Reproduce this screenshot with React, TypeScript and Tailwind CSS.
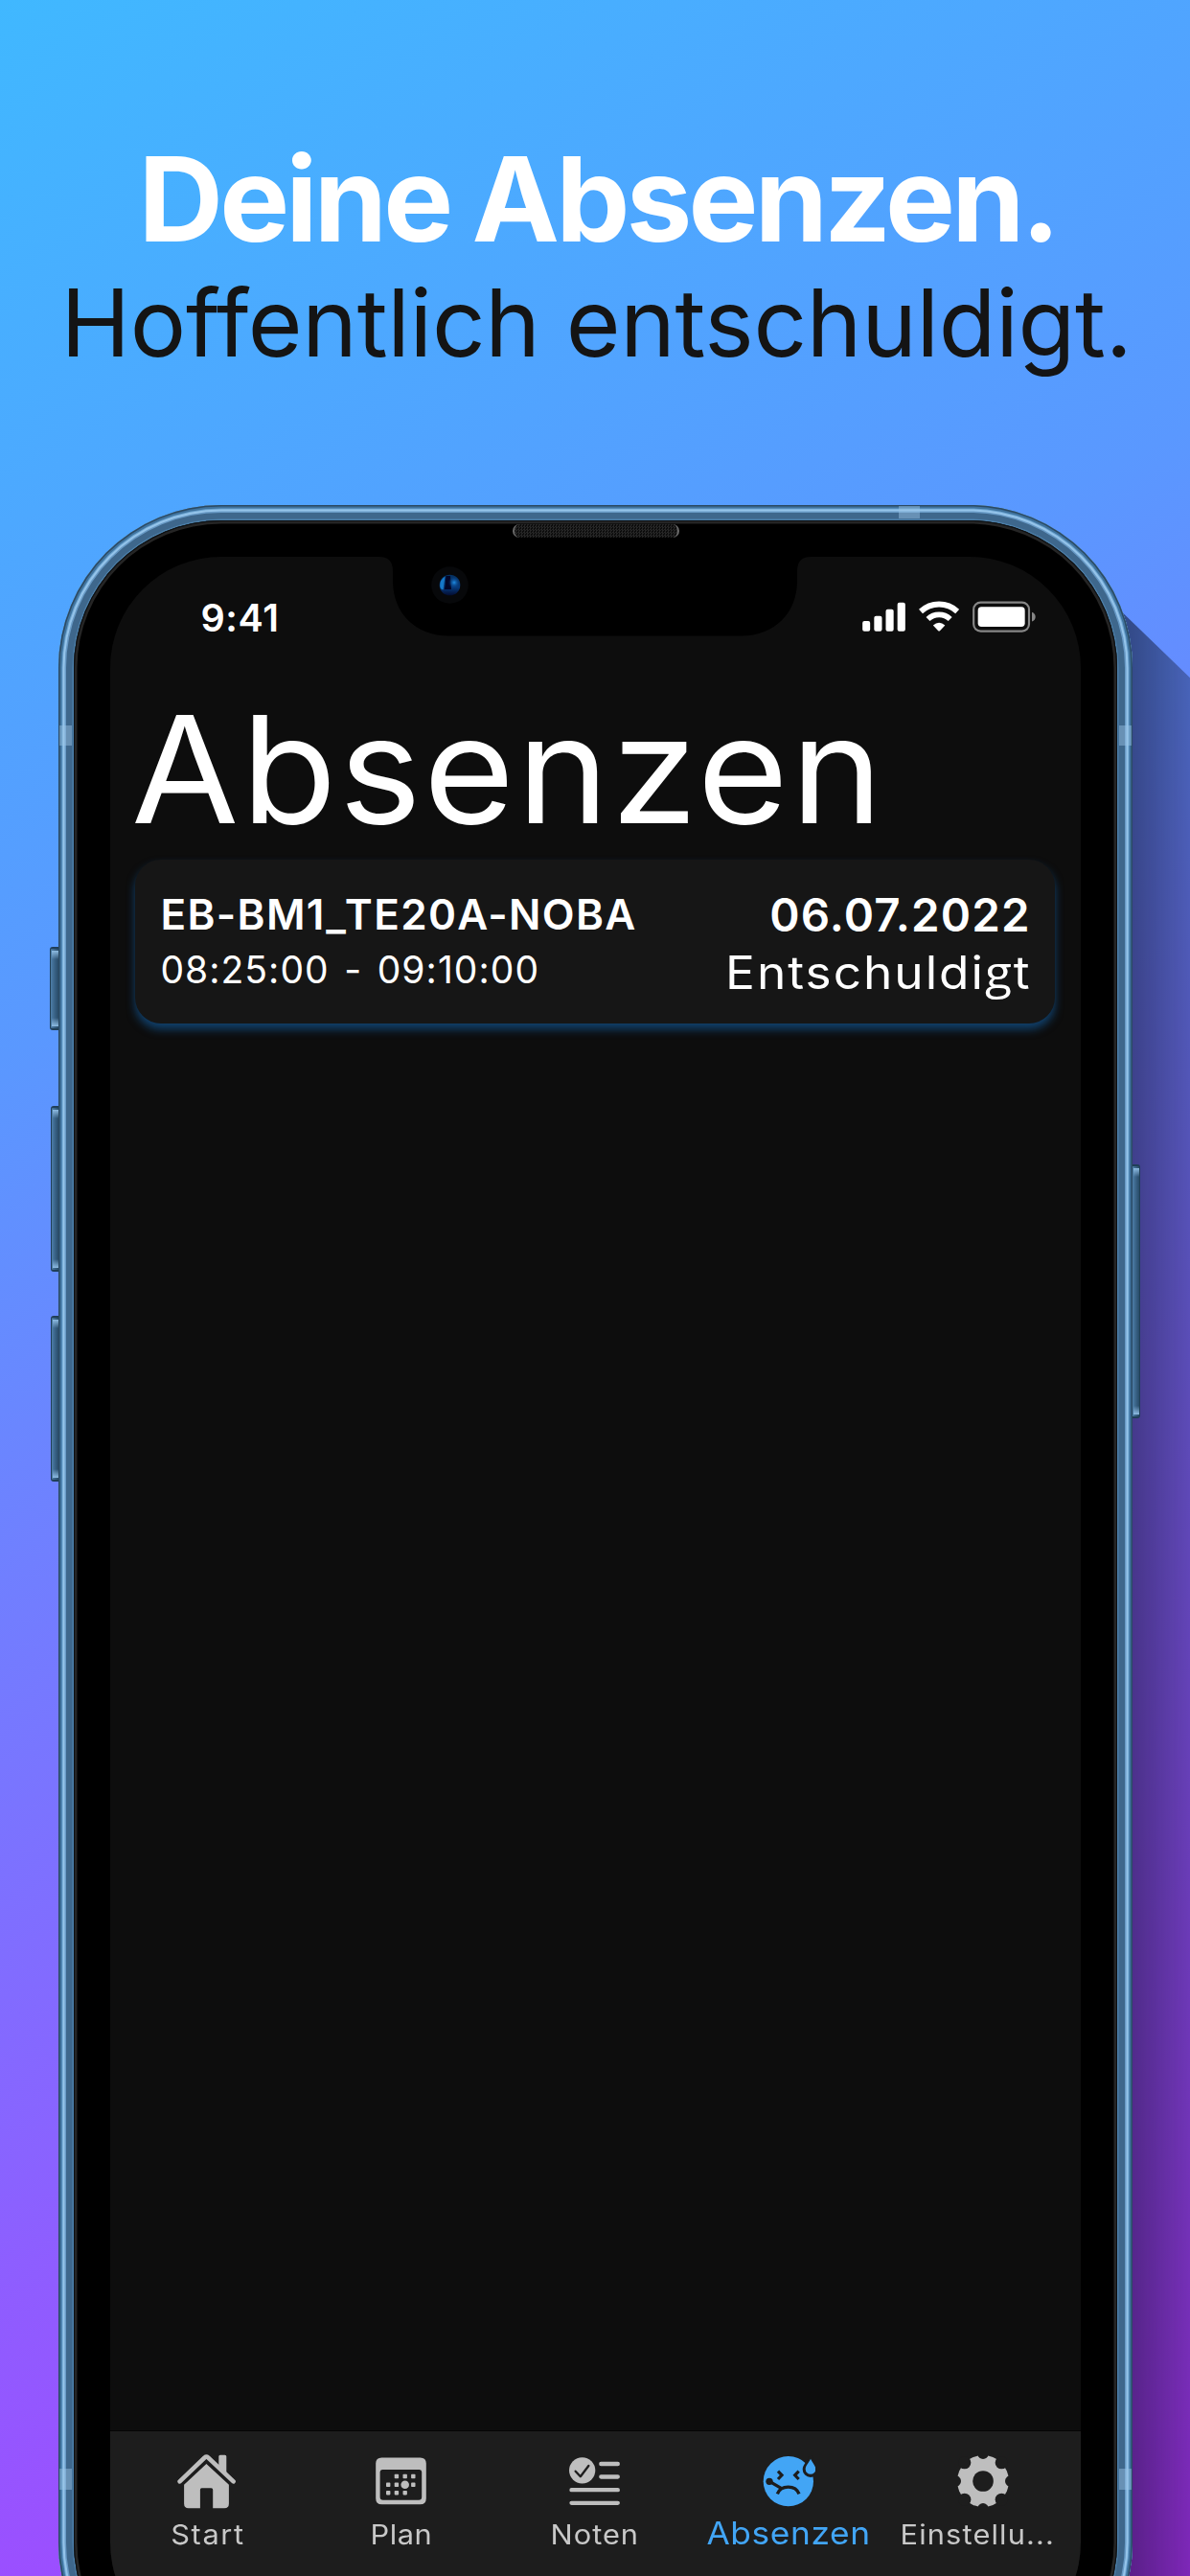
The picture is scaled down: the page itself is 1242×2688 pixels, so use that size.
import type { ReactNode } from "react";

function SignalIcon() {
  return (
    <svg className="h-[33px] w-[45px]" viewBox="237 382 135 99" fill="#fff">
      <rect x="237.5" y="445" width="24" height="32" rx="6" />
      <rect x="274" y="429" width="24.5" height="48" rx="6" />
      <rect x="310.5" y="408" width="24.5" height="69" rx="6" />
      <rect x="347" y="387" width="24.5" height="90" rx="6" />
    </svg>
  );
}

function WifiIcon() {
  return (
    <svg className="h-[33px] w-[42px]" viewBox="414 382 126 99" fill="none" stroke="#fff">
      <path d="M420 415 A84 84 0 0 1 534.500 415" strokeWidth="17.500" />
      <path d="M442.500 439 A50 50 0 0 1 512 439" strokeWidth="17" />
      <path d="M458.500 458.500 Q477.300 442 496 458.500 L480.500 475 Q477.300 478 474 475 Z" fill="#fff" stroke="none" />
    </svg>
  );
}

function BatteryIcon() {
  return (
    <svg className="h-[33px] w-[66px]" viewBox="582 382 198 99">
      <rect x="585.500" y="387" width="173.500" height="90" rx="22" fill="none" stroke="#868686" strokeWidth="6.500" />
      <rect x="599" y="401" width="147" height="62" rx="11" fill="#fff" />
      <path d="M768 417.500 Q779 422 779 432 Q779 442 768 446.500 Z" fill="#868686" />
    </svg>
  );
}

function HomeIcon() {
  return (
    <svg className="h-[57px] w-[62px]" viewBox="0 0 62 57" fill="#bebebe">
      <path d="M43.300 2.300 a1.500 1.500 0 0 1 1.500 -1.500 h5 a1.500 1.500 0 0 1 1.500 1.500 V19.500 L43.300 12 Z" />
      <path d="M2.600 28.300 L28.500 3.500 Q30.400 1.900 32.300 3.500 L58.600 28.300" fill="none" stroke="#bebebe" strokeWidth="4.600" strokeLinecap="round" />
      <path d="M30.400 10 L53.900 31.800 V51.500 Q53.900 56.200 49.200 56.200 H37.200 V37 Q37.200 35.300 35.500 35.300 H25.500 Q23.900 35.300 23.900 37 V56.200 H11.800 Q7.100 56.200 7.100 51.500 V31.800 Z" />
    </svg>
  );
}

const calendarDots: [number, number][] = [
  [21.9, 20], [30.7, 20], [39.3, 20],
  [13.2, 28.8], [21.9, 28.8], [39.3, 28.8],
  [13.2, 37.2], [21.9, 37.2], [30.7, 37.2],
];

function PlanIcon() {
  return (
    <svg className="h-[50px] w-[53px]" viewBox="0 0 53 50" fill="#bebebe">
      <path
        fillRule="evenodd"
        d="M6.500 0.500 H46.500 Q52.800 0.500 52.800 6.500 V43 Q52.800 49.300 46.500 49.300 H6.500 Q0.200 49.300 0.200 43 V6.500 Q0.200 0.500 6.500 0.500 Z M7 13 Q4.600 13 4.600 15.500 V41.500 Q4.600 44.800 7.800 44.800 H45 Q48.200 44.800 48.200 41.500 V15.500 Q48.200 13 45.800 13 Z"
      />
      {calendarDots.map(([x, y]) => (
        <rect key={x + "-" + y} x={x - 2.2} y={y - 2.2} width="4.400" height="4.400" rx="0.800" />
      ))}
      <circle cx="30.700" cy="28.800" r="4.300" />
    </svg>
  );
}

function GradesIcon() {
  return (
    <svg className="h-[50.700px] w-[53.300px]" viewBox="100 71 160 152" fill="none" stroke="#bebebe" strokeWidth="13" strokeLinecap="round">
      <circle cx="141" cy="112.500" r="41" fill="#bebebe" stroke="none" />
      <path d="M120 115 L135.500 131.500 L161 98" stroke="#1d1d1d" strokeWidth="7" strokeLinejoin="round" />
      <path d="M200 92 H252.500 M200 132.500 H252.500 M107.500 173.500 H252.500 M107.500 214.500 H252.500" />
    </svg>
  );
}

function SickIcon() {
  return (
    <svg className="h-[54px] w-[56px]" viewBox="707 66 168 162" fill="none">
      <circle cx="790.500" cy="147.500" r="78.500" fill="#42a5f5" />
      <path d="M860 80 C855 92 844 99 844 110 A16 16 0 0 0 876 110 C876 99 865 92 860 80 Z" fill="#1d1d1d" stroke="#1d1d1d" strokeWidth="18" />
      <path d="M860 77 C855 89 844 98 844 109.500 A16 16 0 0 0 876 109.500 C876 98 865 89 860 77 Z" fill="#42a5f5" />
      <g stroke="#1d1d1d" strokeWidth="9.500">
        <path d="M758 116 L770 128.500 L758 141" />
        <path d="M823 116 L811 128.500 L823 141" />
        <path d="M756 187 C767 158 813 158 824 187" strokeWidth="10" />
        <path d="M733 149 L769 170" strokeWidth="10" />
      </g>
      <circle cx="731" cy="148" r="11" fill="#1d1d1d" />
    </svg>
  );
}

const gearCuts: [number, number, number][] = [
  [0, -86, 17], [0, 86, 17], [-86, 0, 17], [86, 0, 17],
  [-58, -58, 20], [58, -58, 20], [-58, 58, 20], [58, 58, 20],
];

function GearIcon() {
  return (
    <svg className="h-[54px] w-[54px]" viewBox="-81 -81 162 162">
      <circle r="81" fill="#bebebe" />
      {gearCuts.map(([x, y, r]) => (
        <circle key={x + "/" + y} cx={x} cy={y} r={r} fill="#1d1d1d" />
      ))}
      <circle r="32.500" fill="#1d1d1d" />
    </svg>
  );
}

function Tab({ icon, children }: { icon: ReactNode; children: ReactNode }) {
  return (
    <div className="flex w-[202.400px] flex-col items-center">
      <div className="flex h-[58px] items-center justify-center">{icon}</div>
      {children}
    </div>
  );
}

function SideButton({ className, right = false }: { className: string; right?: boolean }) {
  return (
    <div className={"absolute flex flex-col justify-between overflow-hidden border-[#203f58] bg-linear-to-r from-[#4d7ea8] via-[#3a6387] to-[#284c69] py-[2px] " + (right ? "rounded-r-[3px] border-y-2 border-r " : "rounded-l-[3px] border-y-2 border-l ") + className}>
      <div className="ml-px h-[9px] bg-linear-to-b from-[#8dbbe2] to-transparent" />
      <div className="ml-px h-[9px] bg-linear-to-t from-[#8dbbe2] to-transparent" />
    </div>
  );
}

function Notch() {
  return (
    <svg className="absolute left-[281px] top-[-1px] h-[84px] w-[450px]" viewBox="0 0 450 84" fill="#000">
      <path d="M0 0 V1 Q14 1 14 16 V26 C14 60 38 83.500 72 83.500 H378 C412 83.500 436 60 436 26 V16 Q436 1 450 1 V0 Z" />
    </svg>
  );
}

function Camera() {
  return (
    <svg className="absolute left-[334.500px] top-[10px] size-[39px]" viewBox="0 0 39 39">
      <defs>
        <radialGradient id="lensRight" cx="0.5" cy="0.45" r="0.5">
          <stop offset="0" stopColor="#1f8fe8" />
          <stop offset="1" stopColor="#062f70" stopOpacity="0" />
        </radialGradient>
        <linearGradient id="lensBase" x1="0" y1="0" x2="0" y2="1">
          <stop offset="0" stopColor="#04305f" />
          <stop offset="0.6" stopColor="#063a7c" />
          <stop offset="1" stopColor="#030c30" />
        </linearGradient>
      </defs>
      <circle cx="19.500" cy="19.500" r="19.300" fill="#07080a" />
      <circle cx="19.500" cy="19.500" r="10.800" fill="url(#lensBase)" />
      <path d="M14.500 10.500 Q9 14 9.200 20 Q9.500 24 12.500 24.500 Z" fill="#1678c8" />
      <path d="M15.500 10 H20 L21 24 H14 Z" fill="#020628" />
      <circle cx="24" cy="17.500" r="6.500" fill="url(#lensRight)" />
    </svg>
  );
}

export default function App() {
  return (
    <div className="relative flex h-[2688px] w-[1242px] flex-col overflow-hidden bg-[linear-gradient(152deg,#40b8ff_0%,#5a98ff_33%,#9a50ff_80%,#b434ff_100%)] font-['Inter',sans-serif]">
      <header className="h-[527px] shrink-0 whitespace-nowrap pt-[137.700px]">
        <h1 className="ml-[144.500px] text-[122.500px] font-bold leading-[140px] tracking-[-3.800px] text-white [word-spacing:-2px]">
          Deine Absenzen.
        </h1>
        <p className="-mt-px ml-[63.600px] text-[97.500px] leading-[120px] tracking-[-0.300px] text-[#141414]">Hoffentlich entschuldigt.</p>
      </header>

      <div className="absolute left-[1100px] top-[570px] h-[2300px] w-[300px] bg-[linear-gradient(90deg,rgba(10,12,30,0.52)_27%,rgba(10,12,30,0.46)_33%,rgba(10,12,30,0.29)_50%)] blur-[6px] [clip-path:polygon(0_0,100%_290px,100%_100%,0_100%)]" />

      <div className="relative ml-[61px] h-[2296px] w-[1121px] shrink-0 rounded-[170px] bg-[#4b7ea8] p-[16px] shadow-[inset_0_0_0_1.500px_#2b4a64,inset_0_0_0_3.500px_#3f739e,inset_0_0_0_4.500px_#6ba3d0,inset_0_0_0_6.500px_#95c4ea,inset_0_0_0_8px_#689aC6,inset_0_0_0_14.500px_#3e678c]">
        <SideButton className="-left-[9px] top-[461px] h-[87px] w-[9px]" />
        <SideButton className="-left-[8px] top-[627px] h-[173px] w-[8px]" />
        <SideButton className="-left-[8px] top-[846px] h-[173px] w-[8px]" />
        <SideButton right className="-right-[8px] top-[688px] h-[265px] w-[8px]" />
        <div className="absolute left-px top-[229.500px] h-[21.500px] w-[13px] bg-[#9cc6e6]/45" />
        <div className="absolute right-px top-[229.500px] h-[21.500px] w-[13px] bg-[#9cc6e6]/45" />
        <div className="absolute left-[877px] top-px h-[13px] w-[21.500px] bg-[#9cc6e6]/45" />
        <div className="absolute left-px top-[2049px] h-[21.500px] w-[13px] bg-[#9cc6e6]/45" />
        <div className="absolute right-px top-[2049px] h-[21.500px] w-[13px] bg-[#9cc6e6]/45" />

        <div className="relative size-full rounded-[154px] bg-black p-[38px] shadow-[inset_0_0_0_1px_#0c0f12,inset_0_0_0_3.500px_#252525]">
          <div className="absolute left-[458px] top-[4px] h-[14px] w-[174px] rounded-full border-x-2 border-[#6b6b6b] bg-[repeating-conic-gradient(#262626_0_25%,#0c0c0c_0_50%)] bg-[length:3px_3px]" />

          <div className="relative flex size-full flex-col overflow-hidden rounded-[116px] bg-[#0d0d0d] text-white">
            <Notch />
            <Camera />

            <div className="flex h-[131.700px] shrink-0 items-start justify-between pl-[94.500px] pr-[47px] pt-[39.600px]">
              <span className="text-[39.500px] font-semibold leading-[48px] tracking-[0.600px]">9:41</span>
              <div className="flex gap-[14px] pt-[6.700px]">
                <SignalIcon />
                <WifiIcon />
                <BatteryIcon />
              </div>
            </div>

            <h2 className="ml-[22px] origin-left scale-x-[1.05] text-[155px] font-normal leading-[180px] tracking-[2.300px]">Absenzen</h2>

            <div className="ml-[26px] mt-[4.300px] flex h-[171px] w-[960.400px] shrink-0 justify-between whitespace-nowrap rounded-[27px] bg-[#161616] pl-[26.400px] pr-[25.700px] pt-[29px] shadow-[0_6px_10px_rgba(20,118,205,0.500)]">
              <div>
                <p className="text-[44px] font-semibold leading-[56px] tracking-[1.350px]">EB-BM1_TE20A-NOBA</p>
                <p className="mt-[6.500px] text-[39px] leading-[48px] tracking-[1.050px] [word-spacing:3.500px]">08:25:00 - 09:10:00</p>
              </div>
              <div className="text-right">
                <p className="mt-px text-[47.500px] font-semibold leading-[56px] tracking-[1.120px]">06.07.2022</p>
                <p className="-mr-[1px] mt-[3.500px] origin-right scale-x-[1.070] text-[48px] leading-[56px] tracking-[1.850px]">
                  Entschuldi<span className="font-['Open_Sans',sans-serif]">g</span>t
                </p>
              </div>
            </div>

            <nav className="mt-auto flex h-[232px] shrink-0 whitespace-nowrap bg-[#1d1d1d] pt-[23px] text-[28.500px] leading-[40px] text-[#c8c8c8] shadow-[0_-1px_0_#050505]">
              <Tab icon={<HomeIcon />}>
                <span className="mt-[6.600px] scale-x-[1.080] pl-[2px] tracking-[1.500px]">Start</span>
              </Tab>
              <Tab icon={<PlanIcon />}>
                <span className="mt-[6.600px] scale-x-[1.080] tracking-[0.500px]">Plan</span>
              </Tab>
              <Tab icon={<GradesIcon />}>
                <span className="mt-[6.600px] scale-x-[1.080] tracking-[0.900px]">Noten</span>
              </Tab>
              <Tab icon={<SickIcon />}>
                <span className="mt-[4.500px] scale-x-[1.070] text-[33px] tracking-[0.560px] text-[#42a5f5]">Absenzen</span>
              </Tab>
              <Tab icon={<GearIcon />}>
                <span className="mt-[6.600px] scale-x-[1.080] pr-[11px] tracking-[1.050px]">Einstellu...</span>
              </Tab>
            </nav>
          </div>
        </div>
      </div>
    </div>
  );
}
